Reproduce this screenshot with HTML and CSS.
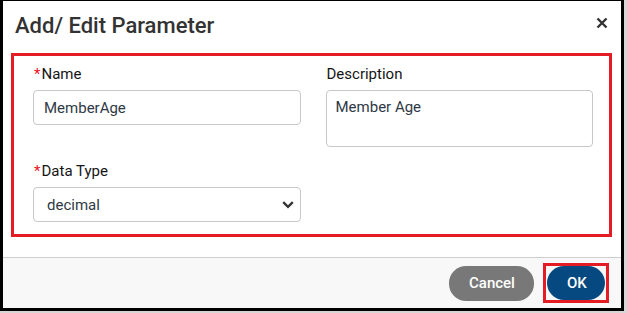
FILE: index.html
```html
<!DOCTYPE html>
<html lang="en">
<head>
    <meta charset="UTF-8">
    <meta name="viewport" content="width=device-width, initial-scale=1.0">
    <title>Add/ Edit Parameter</title>
    <link rel="stylesheet" href="styles.css">
</head>
<body>
    <div class="modal">
        <div class="modal-header">
            <h2>Add/ Edit Parameter</h2>
            <button class="close-btn" type="button" aria-label="Close">
                <svg width="12" height="12" viewBox="0 0 12 12">
                    <path d="M1.5 1.5 L10.5 10.5 M10.5 1.5 L1.5 10.5" stroke="#333" stroke-width="2.4" fill="none"/>
                </svg>
            </button>
        </div>

        <div class="modal-body">
            <form class="param-form">
                <div class="form-group">
                    <label><span class="req">*</span>Name</label>
                    <input type="text" value="MemberAge">
                </div>
                <div class="form-group">
                    <label>Description</label>
                    <textarea>Member Age</textarea>
                </div>
                <div class="form-group">
                    <label><span class="req">*</span>Data Type</label>
                    <div class="select-wrap">
                        <select>
                            <option>decimal</option>
                            <option>integer</option>
                            <option>string</option>
                        </select>
                        <svg class="chevron" width="12" height="8" viewBox="0 0 12 8">
                            <path d="M1.2 1.2 L6 5.8 L10.8 1.2" stroke="#333" stroke-width="2.3" fill="none"/>
                        </svg>
                    </div>
                </div>
            </form>
        </div>

        <div class="modal-footer">
            <button class="btn btn-cancel" type="button">Cancel</button>
            <span class="highlight">
                <button class="btn btn-ok" type="button">OK</button>
            </span>
        </div>
    </div>
</body>
</html>
```

FILE: styles.css
```css
* {
    margin: 0;
    padding: 0;
    box-sizing: border-box;
    font-family: Roboto, "Liberation Sans", Arial, sans-serif;
}

body {
    background-color: #d6d6d6;
    width: 627px;
    height: 313px;
    overflow: hidden;
}

.modal {
    width: 624px;
    height: 311px;
    background-color: white;
    border-style: solid;
    border-color: #000;
    border-width: 1px 3px 3px 3px;
    display: flex;
    flex-direction: column;
}

.modal-header {
    display: flex;
    justify-content: space-between;
    align-items: flex-start;
    padding: 12px 13px 14px 12px;
}

.modal-header h2 {
    font-size: 22px;
    line-height: 26px;
    font-weight: 500;
    color: #333;
}

.close-btn {
    background: none;
    border: none;
    cursor: pointer;
    margin-top: 4px;
    width: 12px;
    height: 12px;
}

.close-btn svg {
    display: block;
}

.modal-body {
    padding: 0 9px 20px 8px;
}

.param-form {
    display: grid;
    grid-template-columns: 1fr 1fr;
    column-gap: 25px;
    row-gap: 14px;
    align-items: start;
    border: 3px solid #e41d25;
    padding: 8px 16px 12px 19px;
}

.form-group {
    display: flex;
    flex-direction: column;
    gap: 6px;
}

.form-group label {
    font-size: 15px;
    line-height: 20px;
    color: #151515;
    padding-left: 1px;
}

.req {
    color: #e8101b;
    margin-right: 1px;
}

input, textarea, select {
    width: 100%;
    border: 1px solid #c8c8c8;
    border-radius: 4px;
    font-size: 15px;
    line-height: 20px;
    color: #2f3946;
    background-color: white;
}

input {
    height: 35px;
    padding: 0 10px;
}

textarea {
    height: 57px;
    padding: 6px 9px;
    resize: none;
}

.select-wrap {
    position: relative;
}

select {
    height: 35px;
    padding: 0 13px;
    appearance: none;
    -webkit-appearance: none;
}

.chevron {
    position: absolute;
    right: 7px;
    top: 14px;
    pointer-events: none;
}

.modal-footer {
    flex: 1;
    display: flex;
    justify-content: flex-end;
    align-items: center;
    gap: 9px;
    padding-right: 12px;
    background-color: #f8f8f8;
    border-top: 1px solid #cfcfcf;
}

.btn {
    height: 34px;
    border: none;
    border-radius: 17px;
    padding: 0 20px;
    font-size: 15px;
    font-weight: 500;
    color: white;
    cursor: pointer;
}

.btn-cancel {
    width: 85px;
    height: 35px;
    background-color: #787878;
}

.btn-ok {
    width: 58px;
    background-color: #064880;
    display: block;
}

.highlight {
    border: 3px solid #e41d25;
    padding: 0 1px;
}
```
